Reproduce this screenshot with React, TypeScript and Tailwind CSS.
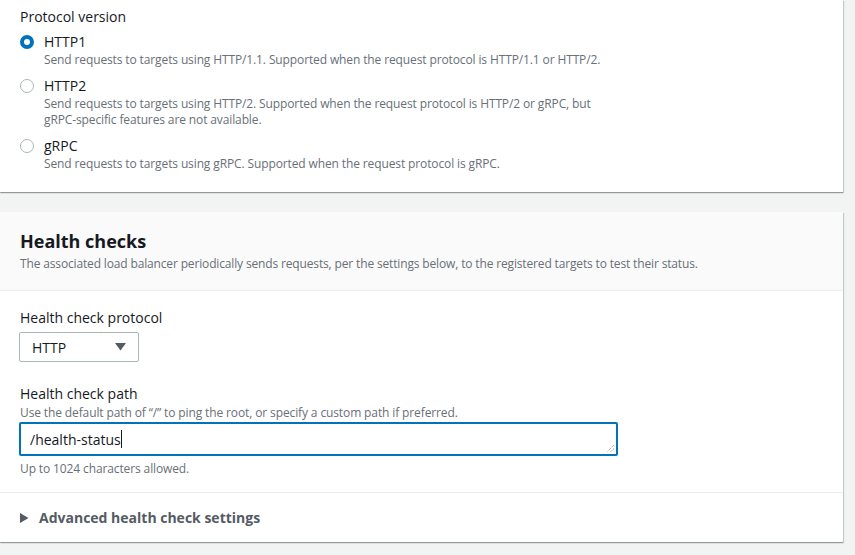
import React from "react";

const font = { fontFamily: '"Open Sans", "Noto Sans", Arial, sans-serif' };

type Option = { id: string; label: string; lines: string[] };

const options: Option[] = [
  {
    id: "HTTP1",
    label: "HTTP1",
    lines: ["Send requests to targets using HTTP/1.1. Supported when the request protocol is HTTP/1.1 or HTTP/2."],
  },
  {
    id: "HTTP2",
    label: "HTTP2",
    lines: [
      "Send requests to targets using HTTP/2. Supported when the request protocol is HTTP/2 or gRPC, but",
      "gRPC-specific features are not available.",
    ],
  },
  {
    id: "gRPC",
    label: "gRPC",
    lines: ["Send requests to targets using gRPC. Supported when the request protocol is gRPC."],
  },
];

function Radio({ checked }: { checked: boolean }) {
  return checked ? (
    <span className="w-[14px] h-[14px] rounded-full border-[4px] border-[#0073bb] bg-white shrink-0" />
  ) : (
    <span className="w-[14px] h-[14px] rounded-full border-[1.5px] border-[#aab7b8] bg-white shrink-0" />
  );
}

export default function App() {
  const selected = "HTTP1";

  return (
    <div className="min-h-[555px] w-[855px] bg-[#f2f3f3] text-[#16191f]" style={font}>
      {/* Protocol version card */}
      <div className="w-[843px] bg-white shadow-[0_1px_1px_0_rgba(0,28,36,0.3),1px_1px_1px_0_rgba(0,28,36,0.15)] pl-[20px] pt-[6px] pb-[20px]">
        <div className="text-[14px] leading-[22px]">Protocol version</div>
        <div className="mt-[4px] flex flex-col gap-[8px]">
          {options.map((o) => (
            <div key={o.id}>
              <div className="flex items-center gap-[10px] h-[20px]">
                <Radio checked={o.id === selected} />
                <span className="text-[14px] leading-[20px]">{o.label}</span>
              </div>
              <div className="pl-[24px] text-[12px] leading-[16px] tracking-[-0.12px] text-[#687078]">
                {o.lines.map((l) => (
                  <div key={l}>{l}</div>
                ))}
              </div>
            </div>
          ))}
        </div>
      </div>

      {/* Health checks card */}
      <div className="mt-[20px] w-[843px] bg-white shadow-[0_1px_1px_0_rgba(0,28,36,0.3),1px_1px_1px_0_rgba(0,28,36,0.15)]">
        <div className="bg-[#fafafa] border-b border-[#eaeded] pl-[20px] pt-[17px] pb-[18px]">
          <h2 className="text-[18px] leading-[24px] font-bold">Health checks</h2>
          <p className="mt-[3px] text-[12px] leading-[16px] tracking-[-0.15px] text-[#687078]">
            The associated load balancer periodically sends requests, per the settings below, to the registered targets to test their status.
          </p>
        </div>

        <div className="pl-[20px] pt-[16px] pb-[15px] border-b border-[#eaeded]">
          <div className="text-[14px] leading-[22px]">Health check protocol</div>
          <div className="-ml-px mt-[3px] w-[120px] h-[30px] border border-[#aab7b8] rounded-[2px] flex items-center justify-between pl-[12px] pr-[12px] text-[14px]">
            <span>HTTP</span>
            <svg width="11" height="8" viewBox="0 0 11 8">
              <path d="M0 0 H11 L5.5 7.5 Z" fill="#545b64" />
            </svg>
          </div>

          <div className="mt-[21px] text-[14px] leading-[22px]">Health check path</div>
          <div className="text-[12px] leading-[16px] tracking-[-0.12px] text-[#687078]">
            Use the default path of “/” to ping the root, or specify a custom path if preferred.
          </div>
          <div className="relative -ml-px mt-[1px] w-[599px] h-[34px] border-2 border-[#0073bb] rounded-[2px] flex items-center pl-[9px] text-[14px]">
            <span>/health-status</span>
            <span className="w-px h-[18px] bg-[#16191f]" />
            <svg className="absolute right-[1px] bottom-[1px]" width="9" height="9" viewBox="0 0 9 9">
              <path d="M8 1 L1 8 M8 4.5 L4.5 8" stroke="#8d9496" strokeWidth="1" strokeDasharray="1 1" />
            </svg>
          </div>
          <div className="mt-[5px] text-[12px] leading-[16px] tracking-[-0.12px] text-[#687078]">Up to 1024 characters allowed.</div>
        </div>

        <div className="pl-[20px] pt-[14px] pb-[13px] flex items-center gap-[10px]">
          <svg width="9" height="10" viewBox="0 0 9 10">
            <path d="M0 0 L8.5 5 L0 10 Z" fill="#545b64" />
          </svg>
          <span className="text-[14px] leading-[22px] font-bold text-[#545b64]">Advanced health check settings</span>
        </div>
      </div>
    </div>
  );
}
